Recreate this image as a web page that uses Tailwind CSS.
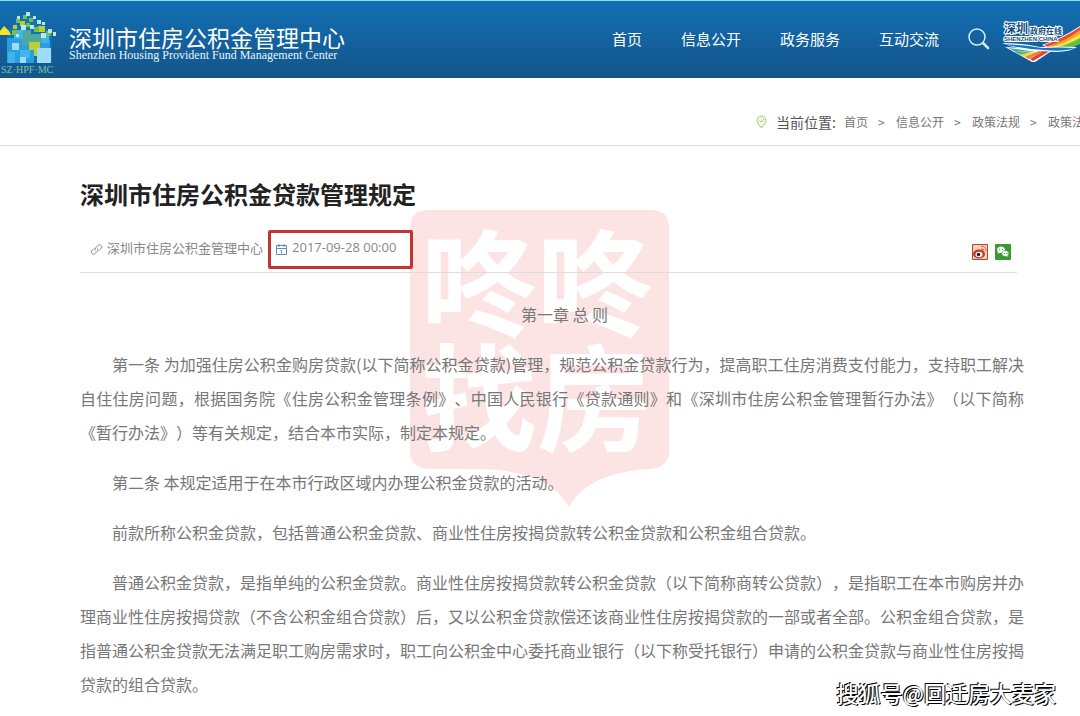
<!DOCTYPE html>
<html lang="zh-CN">
<head>
  <meta charset="UTF-8" />
  <meta name="viewport" content="width=device-width, initial-scale=1.0" />
  <title>深圳市住房公积金贷款管理规定</title>
  <script src="https://cdn.jsdelivr.net/npm/@tailwindcss/browser@4"></script>
</head>
<body class="relative min-h-screen overflow-x-hidden bg-white font-['Noto_Sans_CJK_SC',sans-serif] text-[#777]">

  <!-- Header -->
  <header class="flex h-[78px] items-center overflow-hidden border-t border-[#8fdcf2] bg-linear-to-b from-[#116fb4] to-[#14558a] text-white">
    <a href="#" class="flex shrink-0 items-center gap-3">
      <svg class="h-[68px] w-[57px]" viewBox="0 0 57 68" aria-hidden="true">
        <path d="M7 25L28 6l24 22v29H7z" fill="#187fc0" opacity=".5" />
        <path d="M0 25l4-5 3 3 2 2 2 4H0z" fill="#f4e51d" />
        <g fill="#2a9fe0">
          <path d="M7 32h16v25H7zM22 36h12v21H22zM36 34h14v12H36z" />
        </g>
        <g fill="#42b4ec">
          <path d="M14 24h9v9h-9zM20 44h10v8H20zM41 29h8v8h-8zM8 46h7v11H8z" />
        </g>
        <g fill="#4fa89a">
          <path d="M23 24h8v11h-8zM30 28h12v9H30zM22 32h8v7h-8z" />
        </g>
        <g fill="#b8cf36">
          <path d="M29 36h11v8H29zM34 42h7v8h-7zM38 20h7v6h-7zM20 15h5v5h-5zM13 19h4v4h-4z" />
        </g>
        <g fill="#79bd4a">
          <path d="M16 13h4v4h-4zM23 9h4v4h-4zM29 12h4v4h-4zM34 21h5v5h-5zM46 25h5v5h-5zM12 24h5v5h-5zM26 17h4v4h-4z" />
        </g>
        <g fill="#b9e7ef">
          <path d="M26 6h4v4h-4zM17 10h3v3h-3zM21 19h5v5h-5zM33 10h3v3h-3zM30 19h4v4h-4zM37 14h4v4h-4zM42 16h3v3h-3zM48 23h4v4h-4zM53 26h3v4h-3zM41 27h5v5h-5zM16 28h3v3h-3z" />
        </g>
        <g fill="#9edcff">
          <path d="M12 37h7v7h-7zM37 42h14v15H37zM20 51h6v6h-6z" />
        </g>
        <text x="1" y="67" font-family="Liberation Serif, serif" font-size="10" fill="#7fc4a4">SZ·HPF·MC</text>
      </svg>
      <span class="flex flex-col pt-2">
        <span class="text-[23px] leading-[22px]">深圳市住房公积金管理中心</span>
        <span class="pt-px font-['Liberation_Serif',serif] text-xs leading-3 text-[#e6f5fb]">Shenzhen Housing Provident Fund Management Center</span>
      </span>
    </a>
    <nav class="ml-auto flex shrink-0 items-center gap-[39px] text-[15px]">
      <a href="#">首页</a>
      <a href="#">信息公开</a>
      <a href="#">政务服务</a>
      <a href="#">互动交流</a>
    </nav>
    <button type="button" aria-label="搜索" class="ml-7 shrink-0">
      <svg class="size-[23px]" viewBox="0 0 23 23" fill="none" stroke="#d6edf8" stroke-linecap="round">
        <circle cx="10" cy="9" r="8" stroke-width="1.5" />
        <path d="M16 15l5 5" stroke-width="2.5" />
      </svg>
    </button>
    <a href="#" aria-label="深圳政府在线" class="ml-3 shrink-0">
      <svg class="h-12 w-[78px]" viewBox="0 0 78 48">
        <path d="M40 29Q60 22 78 10v6Q62 28 46 32z" fill="#fff" />
        <path d="M42 29Q62 22 78 11v4Q60 28 46 31z" fill="#e84b32" />
        <path d="M46 30Q62 26 78 14v5Q62 30 48 32z" fill="#f7a12c" />
        <path d="M49 31Q64 27 78 18v5Q66 31 51 33z" fill="#f3e33a" />
        <path d="M52 32Q66 29 78 22v6Q68 33 56 34z" fill="#5cbf4b" />
        <path d="M3 31l27 15h3l18-12z" fill="#fff" />
        <path d="M6 32l8 4 14-1z" fill="#38a1dc" />
        <path d="M12 36l7 3 14-4z" fill="#55bd63" />
        <path d="M18 39l5 2 16-6z" fill="#f1d53a" />
        <path d="M23 41l4 2 16-8h-6z" fill="#ed8134" />
        <path d="M28 43l3 2 17-10h-6z" fill="#dd4036" />
        <path d="M0 27q20 0 38 4 20-1 37 0-10 7-34 4-25-1-41-8z" fill="#fff" />
        <path d="M2 28q20 1 38 4 18-1 33 0-11 4-31 2-22-1-40-6z" fill="#1678c4" />
        <g font-family="Noto Sans CJK SC, sans-serif" font-weight="700" fill="#155080" stroke="#fff" stroke-width="2" paint-order="stroke">
          <text x="2" y="17" font-size="12">深圳</text>
          <text x="28" y="18" font-size="8">政府在线</text>
          <text x="2" y="25" font-family="Liberation Sans, sans-serif" font-size="6">SHENZHEN CHINA</text>
        </g>
      </svg>
    </a>
  </header>

  <!-- Breadcrumb -->
  <div class="flex h-[68px] items-end border-b border-[#ddd] pb-[13px]">
    <nav aria-label="当前位置" class="ml-auto flex w-[325px] items-center overflow-hidden text-xs leading-5 whitespace-nowrap">
      <svg class="mr-2 h-4 w-[13px] shrink-0" viewBox="0 0 13 16" fill="#f1f7e4" stroke="#a9c77c">
        <path d="M6.500 14Q2 9 2 6.500a4.500 4.500 0 0 1 9 0Q11 9 6.500 14z" />
        <path d="M4.500 6.500l1.500 1.500 3-3" fill="none" />
      </svg>
      <span class="mr-2 shrink-0 text-sm leading-5 text-[#555]">当前位置:</span>
      <span class="flex shrink-0 gap-[10px]">
        <a href="#">首页</a><span class="w-2">&gt;</span>
        <a href="#">信息公开</a><span class="w-2">&gt;</span>
        <a href="#">政策法规</a><span class="w-2">&gt;</span>
        <a href="#">政策法规</a>
      </span>
    </nav>
  </div>

  <!-- Article -->
  <main class="relative isolate pt-[30px] pr-14 pl-20">

    <!-- Watermark behind the text -->
    <svg class="absolute top-16 left-[410px] -z-10 h-[298px] w-[259px]" viewBox="0 0 259 298" aria-hidden="true">
      <path d="M18 0H241Q259 0 259 18V241Q259 257 241 259C205 261 174 270 159 297C146 273 115 261 74 259H18Q0 257 0 241V18Q0 0 18 0z" fill="#fce4e5" />
      <g font-family="Noto Sans CJK SC, sans-serif" font-weight="700" font-size="116" fill="#fff">
        <text x="11" y="118">咚咚</text>
        <text x="11" y="232">找房</text>
      </g>
    </svg>

    <div class="mr-[7px] border-b border-[#ddd]">
      <h1 class="text-2xl leading-9 font-bold text-[#222]">深圳市住房公积金贷款管理规定</h1>
      <div class="flex items-center pt-[18px] pb-[3px] text-[13px] text-[#888]">
        <svg class="mr-1 ml-[10px] size-[13px]" viewBox="0 0 13 13" fill="none" stroke="#888">
          <path d="M5.500 7.500q-1-1.500 0-2.500l3-3q1-1 2.500 0.500t0.500 2.500L9 7.500M7.500 5.500q1 1.500 0 2.500l-3 3q-1 1-2.500-0.500t-0.500-2.500L4 5.500" />
        </svg>
        <span class="pb-1">深圳市住房公积金管理中心</span>
        <span class="ml-[5px] flex h-[39px] w-[145px] items-center rounded-xs border-3 border-[#c43531] pl-1">
          <svg class="mr-1 size-[13px]" viewBox="0 0 13 13" fill="none" stroke="#5a8dbd">
            <path d="M1.500 2.500h10v9h-10zM1.500 5.500h10M4 1v3M9 1v3M5.500 7.500h1v3" />
          </svg>
          <time datetime="2017-09-28T00:00" class="pb-1 font-['Open_Sans',sans-serif]">2017-09-28 00:00</time>
        </span>
        <a href="#" aria-label="分享到微博" class="mt-1 ml-auto">
          <svg class="size-4" viewBox="0 0 16 16">
            <path d="M.5.5h15v15H.5z" fill="#fbd3ae" stroke="#9b4a42" />
            <ellipse cx="7" cy="10" rx="6" ry="4.500" fill="#b93b38" />
            <ellipse cx="7" cy="10.500" rx="3.500" ry="2.800" fill="#fff" />
            <circle cx="6.500" cy="10.500" r="1.800" fill="#222" />
            <path d="M9 5q3-1 3 2M9 2.500q5-1 5 4.500" fill="none" stroke="#d86b3d" />
          </svg>
        </a>
        <a href="#" aria-label="分享到微信" class="mt-1 mr-[6px] ml-[7px]">
          <svg class="size-4" viewBox="0 0 16 16">
            <rect width="16" height="16" rx="1" fill="#359b32" />
            <path d="M2.500 9.500L3 8a4 3.300 0 1 1 2 1z" fill="#fff" />
            <path d="M13.500 13L13 11.500a3.500 3 0 1 0-2 1z" fill="#fff" stroke="#359b32" stroke-width=".6" />
            <path d="M4 5h1v1H4zM7 5h1v1H7zM9 9h1v1H9zM11.500 9h1v1h-1z" fill="#359b32" />
          </svg>
        </a>
      </div>
    </div>

    <article class="space-y-4 pt-6 text-justify text-base leading-[34px] [text-spacing-trim:space-all]">
      <h2 class="mr-[7px] text-center indent-8">第一章 总 则</h2>
      <p class="indent-8">第一条 为加强住房公积金购房贷款(以下简称公积金贷款)管理，规范公积金贷款行为，提高职工住房消费支付能力，支持职工解决自住住房问题，根据国务院《住房公积金管理条例》、中国人民银行《贷款通则》和《深圳市住房公积金管理暂行办法》（以下简称《暂行办法》）等有关规定，结合本市实际，制定本规定。</p>
      <p class="indent-8">第二条 本规定适用于在本市行政区域内办理公积金贷款的活动。</p>
      <p class="indent-8">前款所称公积金贷款，包括普通公积金贷款、商业性住房按揭贷款转公积金贷款和公积金组合贷款。</p>
      <p class="indent-8">普通公积金贷款，是指单纯的公积金贷款。商业性住房按揭贷款转公积金贷款（以下简称商转公贷款），是指职工在本市购房并办理商业性住房按揭贷款（不含公积金组合贷款）后，又以公积金贷款偿还该商业性住房按揭贷款的一部或者全部。公积金组合贷款，是指普通公积金贷款无法满足职工购房需求时，职工向公积金中心委托商业银行（以下称受托银行）申请的公积金贷款与商业性住房按揭贷款的组合贷款。</p>
    </article>
  </main>

  <!-- Source label over the page -->
  <div class="absolute right-6 bottom-2 text-[22px] leading-8 font-medium text-white [text-shadow:1px_1px_0_#000,-1px_-1px_0_#000]">搜狐号@回迁房大麦家</div>

</body>
</html>
